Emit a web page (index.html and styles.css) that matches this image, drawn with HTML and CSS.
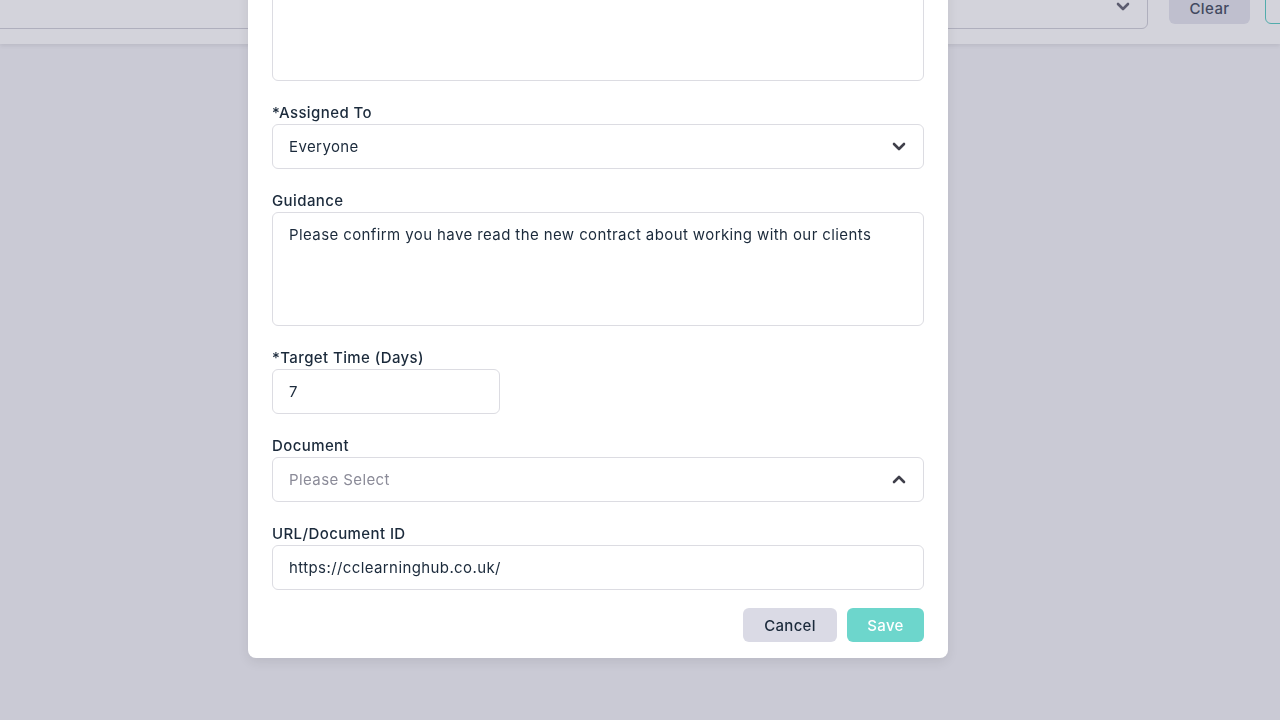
FILE: index.html
```html
<!DOCTYPE html>
<html lang="en">
<head>
    <meta charset="UTF-8">
    <meta name="viewport" content="width=device-width, initial-scale=1.0">
    <title>Add Task</title>
    <link rel="stylesheet" href="styles.css">
</head>
<body>
    <div class="topbar">
        <div class="filter-select">
            <svg class="chevron" width="14" height="9" viewBox="0 0 14 9"><path d="M2 2l5 5 5-5" fill="none" stroke="#6b6b78" stroke-width="2.6" stroke-linecap="round" stroke-linejoin="round"/></svg>
        </div>
        <button class="clear-button">Clear</button>
        <button class="outline-button"></button>
    </div>

    <div class="overlay"></div>

    <div class="modal">
        <div class="field">
            <div class="textarea"></div>
        </div>
        <div class="field">
            <label>*Assigned To</label>
            <div class="input select">
                <span>Everyone</span>
                <svg width="14" height="9" viewBox="0 0 14 9"><path d="M2 2l5 5 5-5" fill="none" stroke="#3f3f4a" stroke-width="2.6" stroke-linecap="round" stroke-linejoin="round"/></svg>
            </div>
        </div>
        <div class="field">
            <label>Guidance</label>
            <div class="textarea guidance">Please confirm you have read the new contract about working with our clients</div>
        </div>
        <div class="field">
            <label>*Target Time (Days)</label>
            <div class="input short">7</div>
        </div>
        <div class="field">
            <label>Document</label>
            <div class="input select">
                <span class="placeholder">Please Select</span>
                <svg width="14" height="9" viewBox="0 0 14 9"><path d="M2 7l5-5 5 5" fill="none" stroke="#3f3f4a" stroke-width="2.6" stroke-linecap="round" stroke-linejoin="round"/></svg>
            </div>
        </div>
        <div class="field">
            <label>URL/Document ID</label>
            <div class="input">https://cclearninghub.co.uk/</div>
        </div>
        <div class="modal-buttons">
            <button class="cancel-button">Cancel</button>
            <button class="save-button">Save</button>
        </div>
    </div>
</body>
</html>
```

FILE: styles.css
```css
body {
    font-family: Inter, "Noto Sans", sans-serif;
    margin: 0;
    height: 100vh;
    background-color: #f4f4f8;
    overflow: hidden;
}
.topbar {
    height: 44px;
    background: #ffffff;
    display: flex;
    align-items: flex-start;
    gap: 20px;
    box-shadow: 0 2px 4px rgba(0, 0, 0, 0.08);
}
.filter-select {
    flex: 1;
    height: 45px;
    margin-top: -16px;
    margin-left: -10px;
    border: 1px solid #d2d2da;
    border-radius: 6px;
    background: #fff;
    display: flex;
    align-items: center;
    justify-content: flex-end;
    padding-right: 17px;
    box-sizing: border-box;
}
.clear-button {
    width: 81px;
    height: 40px;
    margin-top: -16px;
    margin-left: 1px;
    margin-right: -5px;
    padding-top: 10px;
    border: none;
    border-radius: 6px;
    background: #e6e7ef;
    color: #4b5366;
    font-family: inherit;
    font-size: 15px;
    font-weight: 500;
    letter-spacing: 0.4px;
}
.outline-button {
    width: 60px;
    height: 40px;
    margin-top: -16px;
    margin-right: -45px;
    border: 1px solid #5ecfc5;
    border-radius: 6px;
    background: #fff;
}
.overlay {
    position: fixed;
    inset: 0;
    background: rgba(35, 35, 75, 0.2);
}
.modal {
    position: fixed;
    left: 248px;
    bottom: 62px;
    width: 700px;
    box-sizing: border-box;
    padding: 0 24px 16px;
    background: #fff;
    border-radius: 8px;
    box-shadow: 0 4px 12px rgba(0, 0, 0, 0.08);
}
.field {
    margin-bottom: 20px;
}
.field label {
    display: block;
    height: 22px;
    line-height: 24px;
    margin-bottom: 1px;
    font-size: 15px;
    font-weight: 500;
    letter-spacing: 0.4px;
    color: #1b2a3b;
}
.input,
.textarea {
    border: 1px solid #dcdce2;
    border-radius: 6px;
    box-sizing: border-box;
    padding: 0 16px;
    font-size: 15px;
    letter-spacing: 0.4px;
    color: #1b2a3b;
}
.input {
    height: 45px;
    display: flex;
    align-items: center;
}
.input.short {
    width: 228px;
}
.select {
    justify-content: space-between;
    padding-right: 17px;
}
.placeholder {
    color: #8b8b98;
}
.textarea {
    height: 114px;
    padding-top: 11px;
    line-height: 22px;
}
.modal-buttons {
    display: flex;
    justify-content: flex-end;
    gap: 10px;
    margin-top: -2px;
}
.modal-buttons button {
    height: 34px;
    border: none;
    border-radius: 6px;
    font-family: inherit;
    font-size: 15px;
    font-weight: 500;
    letter-spacing: 0.3px;
    cursor: pointer;
}
.cancel-button {
    width: 94px;
    background: #dadae5;
    color: #1b2a3b;
}
.save-button {
    width: 77px;
    background: #6dd6cc;
    color: #fff;
}
```
